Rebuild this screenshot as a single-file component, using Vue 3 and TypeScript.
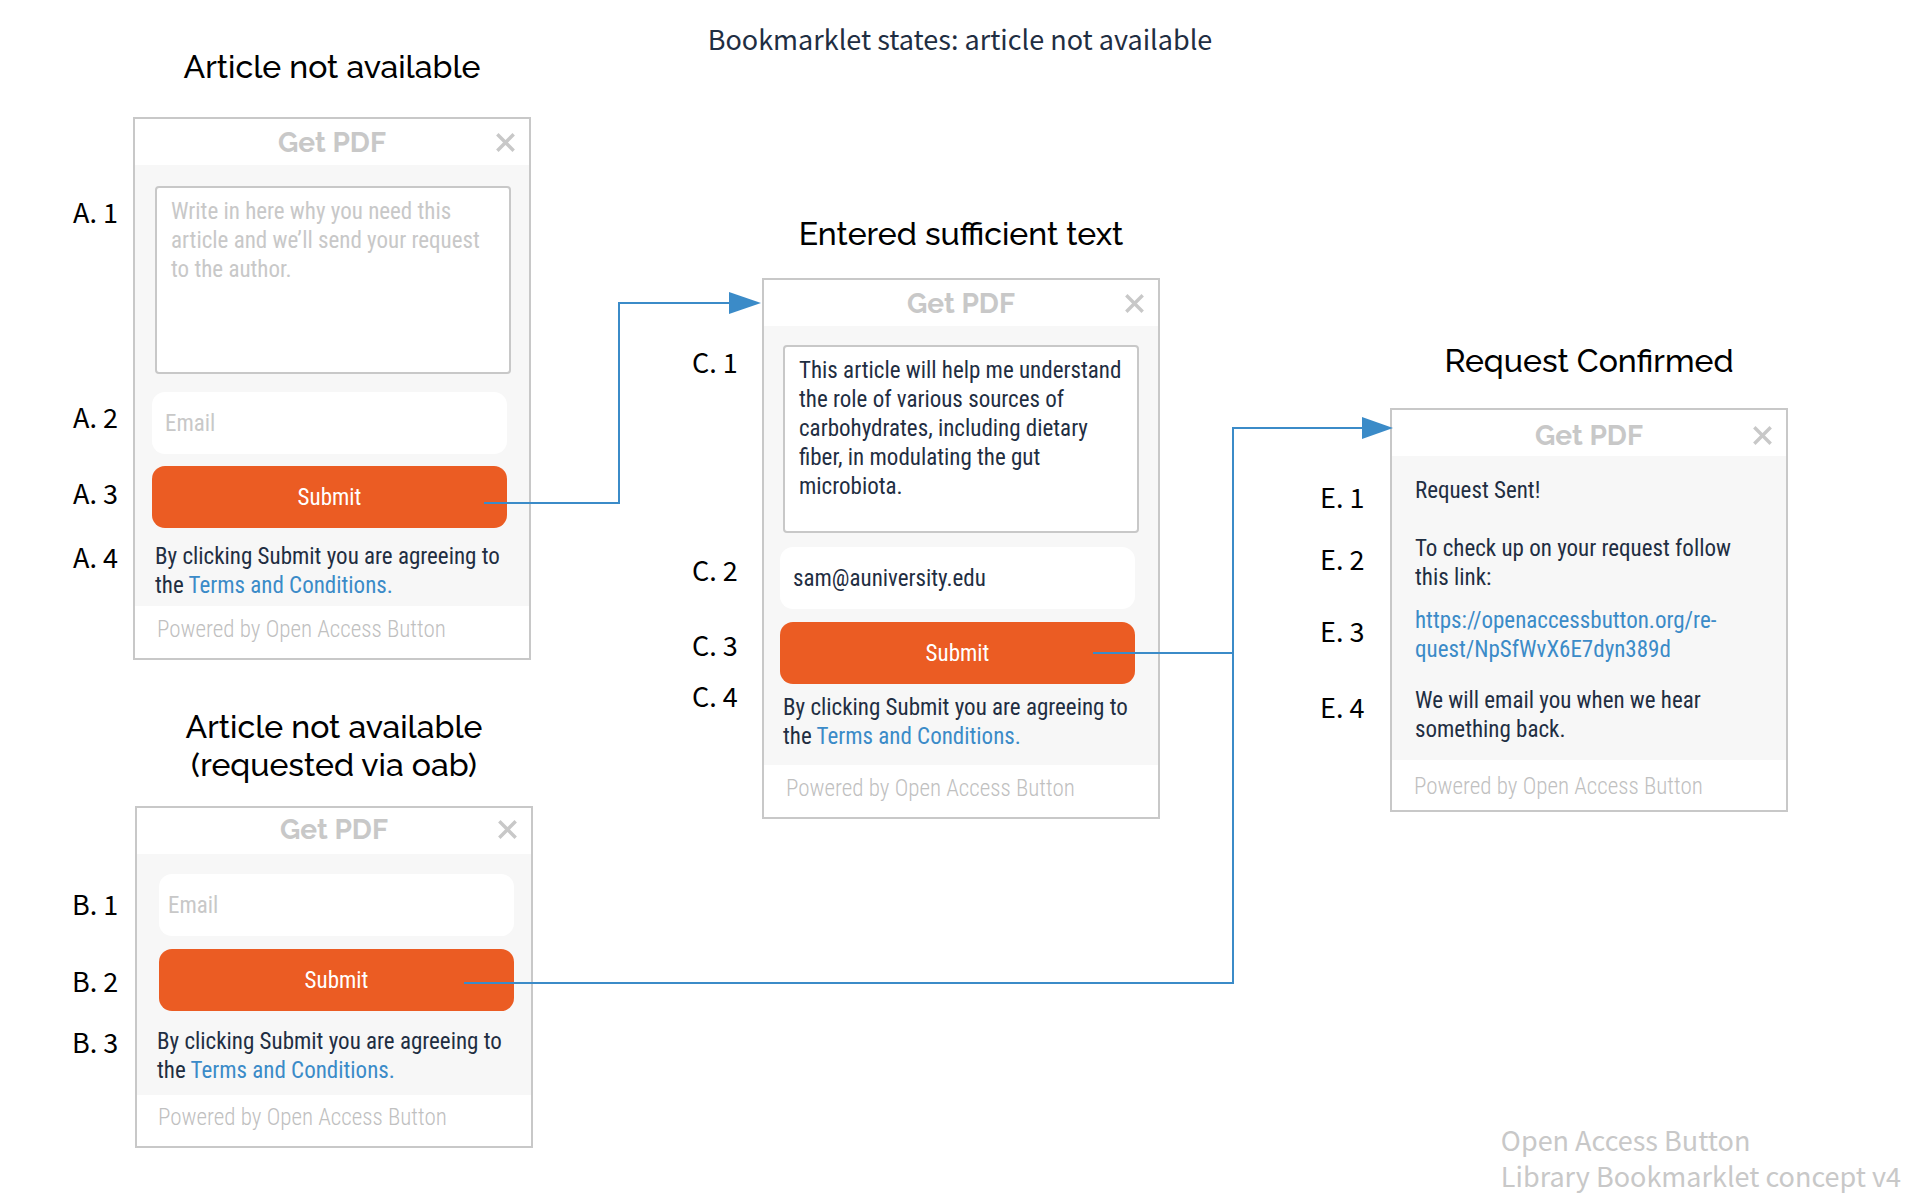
<script setup lang="ts">
import { ref } from 'vue'

interface Point {
  x: number
  y: number
}

interface FormState extends Point {
  id: string
  heading: string[]
  hasReason: boolean
  reason: string
  email: string
}

interface Annotation extends Point {
  text: string
}

const forms = ref<FormState[]>([
  { id: 'a', x: 133, y: 48, heading: ['Article not available'], hasReason: true, reason: '', email: '' },
  { id: 'b', x: 135, y: 708, heading: ['Article not available', '(requested via oab)'], hasReason: false, reason: '', email: '' },
  {
    id: 'c',
    x: 762,
    y: 215,
    heading: ['Entered sufficient text'],
    hasReason: true,
    reason:
      'This article will help me understand the role of various sources of carbohydrates, including dietary fiber, in modulating the gut microbiota.',
    email: 'sam@auniversity.edu',
  },
])

const annotations: Annotation[] = [
  { text: 'A. 1', x: 73, y: 194 },
  { text: 'A. 2', x: 73, y: 399 },
  { text: 'A. 3', x: 73, y: 475 },
  { text: 'A. 4', x: 73, y: 539 },
  { text: 'B. 1', x: 72, y: 886 },
  { text: 'B. 2', x: 72, y: 963 },
  { text: 'B. 3', x: 72, y: 1024 },
  { text: 'C. 1', x: 692, y: 344 },
  { text: 'C. 2', x: 692, y: 552 },
  { text: 'C. 3', x: 692, y: 627 },
  { text: 'C. 4', x: 692, y: 678 },
  { text: 'E. 1', x: 1320, y: 479 },
  { text: 'E. 2', x: 1320, y: 541 },
  { text: 'E. 3', x: 1320, y: 613 },
  { text: 'E. 4', x: 1320, y: 689 },
]

const confirmed: Point = { x: 1390, y: 342 }

const place = (p: Point) => ({ left: `${p.x}px`, top: `${p.y}px` })
</script>

<template>
  <main class="canvas">
    <h1 class="title">Bookmarklet states: article not available</h1>

    <section v-for="form in forms" :key="form.id" class="state" :class="`state-${form.id}`" :style="place(form)">
      <h2 class="heading">
        <span v-for="line in form.heading" :key="line" class="heading-line">{{ line }}</span>
      </h2>
      <form class="card" @submit.prevent>
        <header class="bar">
          <h3 class="bar-title">Get PDF</h3>
          <button class="close" type="button" aria-label="Close">
            <svg viewBox="0 0 19 19" width="19" height="19" aria-hidden="true">
              <path d="M1.3 1.3L17.7 17.7M17.7 1.3L1.3 17.7" />
            </svg>
          </button>
        </header>
        <div class="body">
          <textarea
            v-if="form.hasReason"
            v-model="form.reason"
            class="reason"
            aria-label="Reason for the request"
            placeholder="Write in here why you need this article and we’ll send your request to the author."
          ></textarea>
          <input v-model="form.email" class="email" type="email" aria-label="Email" placeholder="Email" />
          <button class="submit" type="submit">Submit</button>
          <p class="terms">
            By clicking Submit you are agreeing to<br />
            the <a href="#terms">Terms and Conditions.</a>
          </p>
        </div>
        <footer class="powered">Powered by Open Access Button</footer>
      </form>
    </section>

    <section class="state state-e" :style="place(confirmed)">
      <h2 class="heading"><span class="heading-line">Request Confirmed</span></h2>
      <div class="card">
        <header class="bar">
          <h3 class="bar-title">Get PDF</h3>
          <button class="close" type="button" aria-label="Close">
            <svg viewBox="0 0 19 19" width="19" height="19" aria-hidden="true">
              <path d="M1.3 1.3L17.7 17.7M17.7 1.3L1.3 17.7" />
            </svg>
          </button>
        </header>
        <div class="body message">
          <p class="sent">Request Sent!</p>
          <p class="follow">To check up on your request follow this link:</p>
          <p class="link">
            <a href="https://openaccessbutton.org/request/NpSfWvX6E7dyn389d">https://openaccessbutton.org/re&shy;quest/NpSfWvX6E7dyn389d</a>
          </p>
          <p>We will email you when we hear something back.</p>
        </div>
        <footer class="powered">Powered by Open Access Button</footer>
      </div>
    </section>

    <span v-for="note in annotations" :key="note.text" class="annotation" :style="place(note)">{{ note.text }}</span>

    <svg class="connectors" width="1400" height="1000" aria-hidden="true">
      <path class="wire" d="M484 503H619V303H732" />
      <path class="tip" d="M729 292L761 303L729 314Z" />
      <path class="wire" d="M464 983H1233V428H1364" />
      <path class="wire" d="M1093 653H1233" />
      <path class="tip" d="M1362 417L1393 428L1362 439Z" />
    </svg>

    <p class="credit">Open Access Button<br />Library Bookmarklet concept v4</p>
  </main>
</template>

<style>
body {
  margin: 0;
  background: #fff;
}
</style>

<style scoped>
.canvas {
  --line: #c8c8c8;
  --ink: #1f2e42;
  --blue: #3b8bc8;
  position: relative;
  display: flex;
  flex-direction: column;
  box-sizing: border-box;
  min-height: 100vh;
  padding: 21px 19px 6px;
  font-family: 'Roboto Condensed', 'Liberation Sans', sans-serif;
  font-size: 23px;
  font-weight: 400;
  line-height: 29px;
  color: var(--ink);
}

h1,
h2,
h3,
p {
  margin: 0;
}

a {
  color: var(--blue);
  text-decoration: none;
}

.title,
.annotation,
.credit {
  font-family: 'Noto Sans CJK SC', 'Noto Sans', sans-serif;
  font-size: 27px;
  font-weight: 400;
  line-height: 36px;
}

.title {
  text-align: center;
}

.annotation {
  position: absolute;
  color: #000;
  white-space: nowrap;
}

.credit {
  align-self: flex-end;
  margin-top: auto;
  color: var(--line);
}

.state {
  position: absolute;
  width: 398px;
}

.heading {
  margin-bottom: 31px;
  font-family: Raleway, Lato, sans-serif;
  font-size: 32px;
  font-weight: 500;
  line-height: 38px;
  text-align: center;
  color: #000;
}

.heading-line {
  display: block;
}

.card {
  border: 2px solid var(--line);
  background: #fff;
}

.bar {
  display: grid;
  grid-template-columns: 1fr auto 1fr;
  align-items: center;
  box-sizing: border-box;
  height: 46px;
  padding: 0 14px;
}

.bar-title {
  grid-column: 2;
  padding-top: 2px;
  font-family: Raleway, Lato, sans-serif;
  font-size: 28px;
  font-weight: 700;
  line-height: 32px;
  color: var(--line);
}

.close {
  display: flex;
  justify-self: end;
  padding: 0;
  border: 0;
  background: none;
  cursor: pointer;
}

.close path {
  fill: none;
  stroke: var(--line);
  stroke-width: 3.4;
}

.body {
  display: flex;
  flex-direction: column;
  padding: 21px 22px 6px 17px;
  background: #f7f7f7;
}

.reason,
.email,
.submit {
  box-sizing: border-box;
  margin: 0;
  font: inherit;
  outline: none;
}

.reason {
  height: 188px;
  margin: 0 -4px 18px 3px;
  padding: 9px 10px 9px 14px;
  border: 2px solid var(--line);
  border-radius: 4px;
  background: #fff;
  color: var(--ink);
  resize: none;
  overflow: hidden;
}

.email {
  height: 62px;
  margin-bottom: 12px;
  padding: 0 13px;
  border: 0;
  border-radius: 13px;
  background: #fff;
  color: var(--ink);
}

.reason::placeholder,
.email::placeholder {
  color: var(--line);
  opacity: 1;
}

.submit {
  height: 62px;
  margin-bottom: 14px;
  padding: 0;
  border: 0;
  border-radius: 13px;
  background: #eb5c23;
  color: #fff;
  cursor: pointer;
}

.terms {
  margin-left: 3px;
  white-space: nowrap;
}

.powered {
  box-sizing: border-box;
  height: 52px;
  padding: 9px 22px;
  font-weight: 300;
  color: #c0c0c0;
}

.state-b .heading {
  margin-bottom: 22px;
}

.state-b .bar {
  padding-bottom: 4px;
}

.state-b .body {
  padding: 20px 17px 10px 22px;
}

.state-b .email {
  margin-bottom: 13px;
  padding: 0 9px;
}

.state-b .submit {
  margin-bottom: 16px;
}

.state-b .terms {
  margin-left: -2px;
}

.state-b .powered {
  height: 51px;
  padding: 8px 21px;
}

.state-c .heading {
  margin-bottom: 25px;
}

.state-c .body {
  padding: 19px 23px 14px 16px;
}

.state-c .reason {
  margin-bottom: 14px;
}

.state-c .email {
  margin-bottom: 13px;
}

.state-c .submit {
  margin-bottom: 9px;
}

.state-e .heading {
  margin-bottom: 28px;
}

.state-e .bar {
  padding-top: 4px;
}

.message {
  padding: 20px 40px 16px 23px;
}

.sent {
  margin-bottom: 29px;
}

.follow {
  margin-bottom: 14px;
}

.link {
  margin-bottom: 22px;
}

.state-e .powered {
  height: 50px;
  padding-top: 12px;
}

.connectors {
  position: absolute;
  top: 0;
  left: 0;
  pointer-events: none;
}

.wire {
  fill: none;
  stroke: var(--blue);
  stroke-width: 2;
}

.tip {
  fill: var(--blue);
}
</style>
